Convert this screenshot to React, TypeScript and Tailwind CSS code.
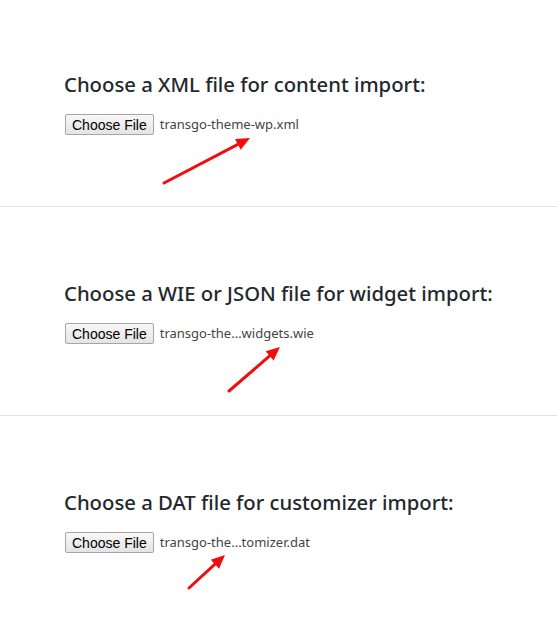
import React from 'react';

type Arrow = { x1: number; y1: number; x2: number; y2: number };

const sections: { title: string; file: string; arrow: Arrow }[] = [
  {
    title: 'Choose a XML file for content import:',
    file: 'transgo-theme-wp.xml',
    arrow: { x1: 164, y1: 183, x2: 250, y2: 138 },
  },
  {
    title: 'Choose a WIE or JSON file for widget import:',
    file: 'transgo-the...widgets.wie',
    arrow: { x1: 229, y1: 184, x2: 280, y2: 140 },
  },
  {
    title: 'Choose a DAT file for customizer import:',
    file: 'transgo-the...tomizer.dat',
    arrow: { x1: 189, y1: 172, x2: 225, y2: 139 },
  },
];

function RedArrow({ x1, y1, x2, y2 }: Arrow) {
  const angle = Math.atan2(y2 - y1, x2 - x1);
  const len = 15;
  const spread = 0.42;
  const bx = x2 - Math.cos(angle) * (len - 4);
  const by = y2 - Math.sin(angle) * (len - 4);
  const p1 = [x2 - Math.cos(angle - spread) * len, y2 - Math.sin(angle - spread) * len];
  const p2 = [x2 - Math.cos(angle + spread) * len, y2 - Math.sin(angle + spread) * len];
  return (
    <svg className="absolute left-0 top-0 pointer-events-none" width="557" height="209">
      <line x1={x1} y1={y1} x2={bx} y2={by} stroke="#f20d0d" strokeWidth="3" strokeLinecap="round" />
      <polygon points={`${x2},${y2} ${p1[0]},${p1[1]} ${p2[0]},${p2[1]}`} fill="#f20d0d" />
    </svg>
  );
}

export default function App() {
  return (
    <div className="bg-white min-h-screen w-[557px] font-['Noto_Sans',sans-serif]">
      {sections.map((s, i) => (
        <section
          key={i}
          className={`relative pl-16 pr-4 pb-[71px] ${i === 0 ? 'pt-[70px]' : 'pt-[72px]'} ${i < 2 ? 'border-b border-[#e2e2e2]' : ''}`}
        >
          <h2 className="whitespace-nowrap text-[20.3px] leading-[28px] font-medium text-[#23282d]">{s.title}</h2>
          <div className="mt-4 flex items-center h-[21px]">
            <button className="ml-px h-[21px] px-[6px] border border-[#a6a6a6] rounded-[2px] bg-gradient-to-b from-[#f8f8f8] to-[#e4e4e4] text-[14px] leading-none text-black font-['Liberation_Sans',Arial,sans-serif]">
              Choose File
            </button>
            <span className="ml-[6px] text-[13px] text-[#444]">{s.file}</span>
          </div>
          <RedArrow {...s.arrow} />
        </section>
      ))}
    </div>
  );
}
